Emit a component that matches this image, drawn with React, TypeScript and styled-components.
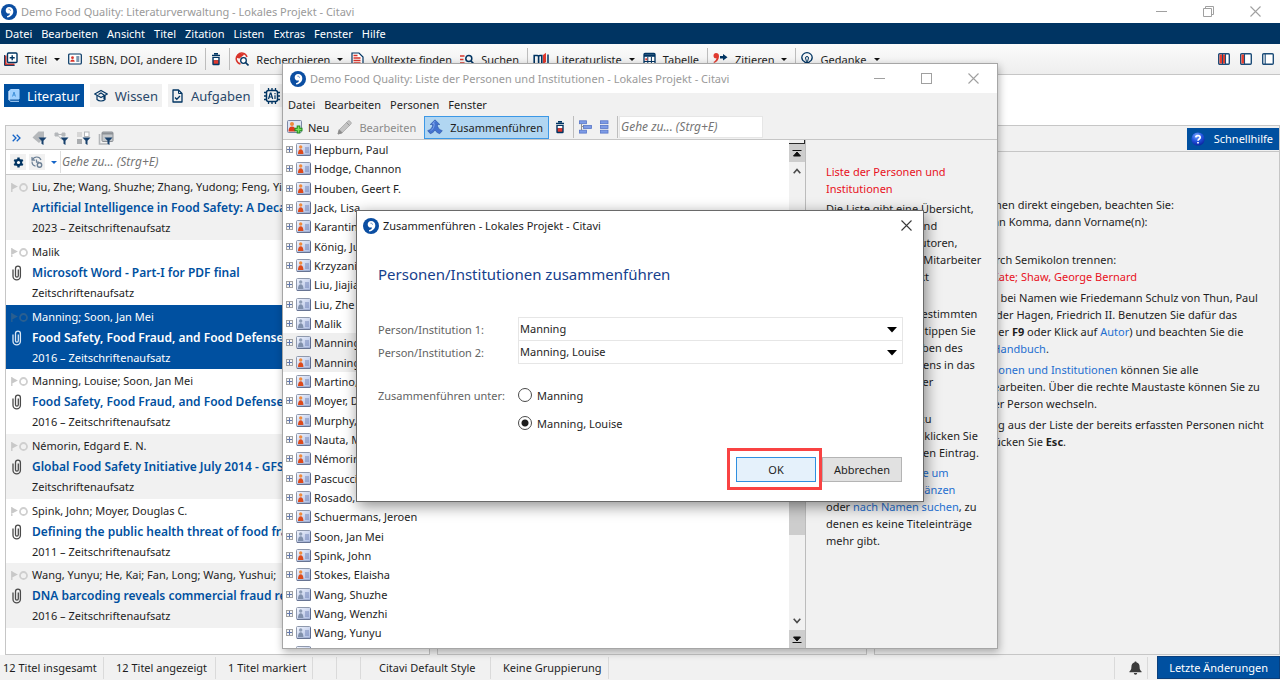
import React from "react";
import styled, { createGlobalStyle, css } from "styled-components";

const navy = "#003462";
const blue = "#0050a0";
const grey = "#f1f1f1";
const line = "#c6c6c6";
const linkBlue = "#1f6fd0";
const red = "#e81123";

const GlobalStyle = createGlobalStyle`
  * { box-sizing: border-box; }
  body { margin: 0; background: #fff; overflow: hidden; }
  body, button, input, select { font-family: "Noto Sans", "Open Sans", sans-serif; font-size: 11px; color: #1e1e1e; }
  button { margin: 0; padding: 0; border: 0; background: none; }
  ul, p, h1, h2, h3 { margin: 0; padding: 0; font-size: 11px; font-weight: 400; }
  ul { list-style: none; }
  svg { display: block; flex: none; }
`;

/* ---------- icons ---------- */

const Logo = () => (
  <svg width="16" height="16" viewBox="0 0 16 16">
    <circle cx="8" cy="8" r="8" fill="#0b4ea2" />
    <path d="M8 3c2.700 0 4.300 1.800 4.300 4.200 0 3.200-2.300 5.500-6 6.300l-.4-1.200c1.900-.7 2.900-1.600 3.100-2.900-.3.1-.7.2-1.100.2-1.900 0-3.200-1.400-3.200-3.200C4.700 4.400 6.100 3 8 3z" fill="#fff" />
    <path d="M7.400 5.200c1.100-.4 2.100.3 2.100 1.600" fill="none" stroke="#0b4ea2" strokeWidth=".6" />
  </svg>
);

const AddTitleIcon = () => (
  <svg width="14" height="14" viewBox="0 0 14 14">
    <path d="M1.500 3.500v9h9" fill="none" stroke="#d8342b" strokeWidth="2" />
    <path d="M.6 3v10.400h10" fill="none" stroke={navy} strokeWidth="1" />
    <rect x="3.500" y="1" width="9.500" height="9.500" rx="1" fill="#fff" stroke={navy} strokeWidth="1.400" />
    <path d="M8.200 3.200v5M5.700 5.700h5" stroke={navy} strokeWidth="1.400" />
  </svg>
);

const IdIcon = () => (
  <svg width="14" height="14" viewBox="0 0 14 14">
    <rect x=".7" y="2" width="12.600" height="10" rx="1" fill="#fff" stroke={navy} strokeWidth="1.200" />
    <circle cx="4.500" cy="5.700" r="1.400" fill="#d8342b" />
    <path d="M2.300 9.800c0-3 4.400-3 4.400 0z" fill="#d8342b" />
    <path d="M8.300 5h3M8.300 7h3M8.300 9h3" stroke={navy} />
  </svg>
);

const JarIcon = () => (
  <svg width="10" height="14" viewBox="0 0 10 14">
    <path d="M3 1.800h4M1 3.500h8" stroke={navy} strokeWidth="1.600" />
    <path d="M1.300 5h7.400v7a1.200 1.200 0 0 1-1.200 1.200h-5A1.200 1.200 0 0 1 1.300 12z" fill={navy} />
    <rect x="2.700" y="6" width="4.600" height="2.200" fill="#fff" />
    <rect x="2.700" y="8.200" width="4.600" height="3.500" fill="#e03a2f" />
  </svg>
);

const ResearchIcon = () => (
  <svg width="14" height="14" viewBox="0 0 14 14">
    <path d="M5.500 12A5.500 5.500 0 1 1 12 5" fill="none" stroke="#d8342b" strokeWidth="1.500" />
    <path d="M2 3l4-1.500 3.500 1-2 1.500-3 2.500L2 6z" fill="#d8342b" />
    <circle cx="8.500" cy="8.500" r="2.800" fill="#fff" stroke={navy} strokeWidth="1.300" />
    <path d="M10.500 10.500l3 3" stroke={navy} strokeWidth="1.600" />
  </svg>
);

const FullTextIcon = () => (
  <svg width="13" height="14" viewBox="0 0 13 14">
    <path d="M1 1h7l4 4v8.500H1z" fill="#fff" stroke={navy} strokeWidth="1.200" />
    <path d="M2.500 3.500h4M2.500 6h7M2.500 8.500h7M2.500 11h7" stroke="#d8342b" strokeWidth="1.400" />
  </svg>
);

const SearchIcon = () => (
  <svg width="14" height="14" viewBox="0 0 14 14">
    <path d="M0 4h4.500M0 7.500h3.500M0 11h4.500" stroke="#d8342b" strokeWidth="1.500" />
    <circle cx="8.800" cy="6.500" r="3" fill="none" stroke={navy} strokeWidth="1.500" />
    <path d="M11 9l2.700 3" stroke={navy} strokeWidth="1.700" />
  </svg>
);

const BiblioIcon = () => (
  <svg width="16" height="14" viewBox="0 0 16 14">
    <path d="M1.200 13V3.500h3.200q1.200 0 1.200 1.200V13M5.600 4.700q0-1.200 1.200-1.200h2V13" fill="none" stroke={navy} strokeWidth="1.600" />
    <path d="M10 3l3-2.200V10l-3 2.200z" fill="#e03a2f" />
    <path d="M15 2.500V12" stroke={navy} strokeWidth="1.500" />
  </svg>
);

const TableIcon = () => (
  <svg width="13" height="14" viewBox="0 0 13 14">
    <rect x="1" y="1.500" width="11" height="11" rx="1" fill="#fff" stroke={navy} strokeWidth="1.300" />
    <path d="M1 3.500h11" stroke={navy} strokeWidth="2.600" />
    <path d="M4.800 5v8M8.400 5v8M1 9.500h11" stroke={navy} />
    <rect x="2.300" y="6.300" width="2" height="2" fill="#e03a2f" />
  </svg>
);

const CiteIcon = () => (
  <svg width="15" height="14" viewBox="0 0 15 14">
    <path d="M3 1c1.900 0 3 1.200 3 3.200C6 7.400 4 9.800 1 11l-.5-1c1.800-1 2.800-2.200 3-3.700C1.700 6.600.5 5.500.5 3.700.5 2.100 1.600 1 3 1z" fill="#e03a2f" />
    <path d="M7 4h3V2l4.500 3.200L10 8.500v-2H7z" fill={navy} />
  </svg>
);

const ThoughtIcon = () => (
  <svg width="12" height="14" viewBox="0 0 12 14">
    <path d="M4 10C1.600 8.800.8 7.300.8 5.500a5.200 4.800 0 0 1 10.400 0C11.200 7.300 10.400 8.800 8 10" fill="none" stroke={navy} strokeWidth="1.300" />
    <path d="M4.500 6a1.500 1.500 0 0 1 3 0L6.500 9.500h-1z" fill="none" stroke={navy} />
    <path d="M3.500 10.500h5M4 12.800h4" stroke={navy} strokeWidth="1.400" />
  </svg>
);

const LayoutIcon = ({ bars }: { bars: number }) => (
  <svg width="12" height="12" viewBox="0 0 12 12">
    <rect x=".7" y=".7" width="10.600" height="10.600" rx="1" fill="#fff" stroke="#1d4d79" strokeWidth="1.400" />
    {bars > 0 && <rect x="1.500" y="1.500" width="2.500" height="9" fill="#e8402f" />}
    {bars > 1 && <rect x="5" y="1.500" width="2" height="9" fill="#e8402f" />}
    <path d={bars === 0 ? "M3.200 1v10" : "M4.500 1v10"} stroke="#1d4d79" strokeWidth="1.100" />
    {bars > 1 && <path d="M7.500 1v10" stroke="#1d4d79" strokeWidth="1.100" />}
  </svg>
);

const BookIcon = () => (
  <svg width="12" height="13" viewBox="0 0 12 13">
    <path d="M2.500.5H11v9.500H2.500a1.200 1.200 0 0 0 0 2.300H11" fill="none" stroke="#b8dcff" />
    <path d="M1 2A1.500 1.500 0 0 1 2.500.5H11V10H1z" fill="#9fd0ff" />
    <path d="M4.500 7.500L6 3l1.500 4.500M5 6h2" fill="none" stroke="#3d8ed8" strokeWidth=".9" />
    <path d="M1 2v9" stroke="#d5eaff" strokeWidth="1.300" />
  </svg>
);

const CapIcon = () => (
  <svg width="14" height="14" viewBox="0 0 14 14">
    <path d="M7 1.500L13.300 5 7 8.500.7 5z" fill="none" stroke={navy} strokeWidth="1.300" strokeLinejoin="round" />
    <path d="M3 6.500v4c2 2 6 2 8 0v-4M4.500 5.500L7 4l3 2v4" fill="none" stroke={navy} strokeWidth="1.200" />
  </svg>
);

const TaskIcon = () => (
  <svg width="12" height="14" viewBox="0 0 12 14">
    <path d="M1 1h5.500L10 4.500V13H1z" fill="none" stroke={navy} strokeWidth="1.300" strokeLinejoin="round" />
    <path d="M6.500 1v3.500H10" fill="none" stroke={navy} />
    <path d="M3 8.500l1.800 1.800L8 7" fill="none" stroke={navy} strokeWidth="1.300" />
  </svg>
);

const ChipIcon = () => (
  <svg width="16" height="16" viewBox="0 0 16 16">
    <path d="M4.500 0v16M8 0v2M11.500 0v16M8 14v2M0 4.500h16M0 8h2M0 11.500h16M14 8h2" stroke={navy} strokeWidth="1.300" />
    <rect x="2.500" y="2.500" width="11" height="11" rx="2" fill={grey} stroke={navy} strokeWidth="1.500" />
    <path d="M4.500 11L6.300 5.200h.7L8.700 11M5.200 9h2.700M11 7.200V11M11 5v1.200" fill="none" stroke={navy} strokeWidth="1.200" />
  </svg>
);

const ChevronsIcon = () => (
  <svg width="9" height="8" viewBox="0 0 9 8">
    <path d="M.7.7L4 4 .7 7.300M4.700.7L8 4 4.700 7.300" fill="none" stroke="#1464c8" strokeWidth="1.300" />
  </svg>
);

const funnel = <path d="M6.500 7.500h8l-3 3.300V15l-2-1.300v-2.900z" fill="#17406c" />;

const FilterTagIcon = () => (
  <svg width="16" height="16" viewBox="0 0 16 16">
    <path d="M.5 7.500L6.500 1.500H12V8L7 13z" fill="#b4b7ba" />
    {funnel}
  </svg>
);
const FilterTreeIcon = () => (
  <svg width="16" height="16" viewBox="0 0 16 16">
    <path d="M1 3h3v3H1zM8 3h3v3H8zM4 4.500h4M4 5.500l3.500 4" fill="#b4b7ba" stroke="#b4b7ba" />
    {funnel}
  </svg>
);
const FilterGridIcon = () => (
  <svg width="16" height="16" viewBox="0 0 16 16">
    <rect x="1" y="2" width="5" height="5" fill="#d6d6d6" />
    <rect x="8.500" y="2" width="4.500" height="4.500" fill="#fff" stroke="#b4b7ba" />
    <rect x="1" y="9" width="5" height="5" fill="#a9acaf" />
    {funnel}
  </svg>
);
const FilterStackIcon = () => (
  <svg width="16" height="16" viewBox="0 0 16 16">
    <path d="M1.500 4v10h9" fill="none" stroke="#b4b7ba" strokeWidth="1.600" />
    <rect x="4" y="2" width="11" height="9.500" rx="1" fill="#c6c9cc" stroke="#8d9196" />
    <path d="M4 3.500h11" stroke="#8d9196" strokeWidth="2" />
    {funnel}
  </svg>
);

const GearIcon = () => (
  <svg width="11" height="11" viewBox="0 0 12 12">
    <g stroke={navy} strokeWidth="2.600">
      <path d="M6 .6v10.800M1.300 3.300l9.400 5.400M1.300 8.700l9.400-5.400" />
    </g>
    <circle cx="6" cy="6" r="4" fill={navy} />
    <circle cx="6" cy="6" r="1.700" fill="#fff" />
  </svg>
);

const HistoryIcon = () => (
  <svg width="12" height="12" viewBox="0 0 12 12">
    <path d="M1.500 4A4.500 4.500 0 0 1 10 4M1 5.500c0 2 1 4 3.500 4.700M1 1v3.200h3.200M5.500 3.500v2.700H8" fill="none" stroke="#6c8096" strokeWidth="1.200" />
    <circle cx="8.500" cy="9" r="2.200" fill="none" stroke="#6c8096" strokeWidth="1.400" />
  </svg>
);

const FlagDot = ({ dim }: { dim?: boolean }) => (
  <svg width="17" height="10" viewBox="0 0 17 10">
    <path d="M.8 1v9M.8 2l4.700 2.500L.8 7z" fill={dim ? "#2a5f90" : "#c8c8c8"} stroke={dim ? "#2a5f90" : "#c8c8c8"} strokeWidth="1.300" />
    <circle cx="12.500" cy="5.500" r="3.500" fill="none" stroke={dim ? "#2a5f90" : "#cfcfcf"} strokeWidth="1.800" />
  </svg>
);

const ClipIcon = ({ color }: { color: string }) => (
  <svg width="11" height="16" viewBox="0 0 11 16">
    <path d="M7.300 4.500v6.200a1.400 1.400 0 0 1-2.800 0V3.500a2.400 2.400 0 0 1 4.900 0v7.700a3.700 3.700 0 0 1-7.400 0V4.500" fill="none" stroke={color} strokeWidth="1.300" />
  </svg>
);

const HelpIcon = () => (
  <svg width="14" height="14" viewBox="0 0 14 14">
    <defs>
      <radialGradient id="help" cx=".4" cy=".25" r=".8">
        <stop offset="0" stopColor="#7aa8ff" />
        <stop offset=".5" stopColor="#2456e0" />
        <stop offset="1" stopColor="#0a1f9c" />
      </radialGradient>
    </defs>
    <circle cx="7" cy="7" r="6.600" fill="url(#help)" />
    <path d="M4.800 5.400C4.900 3 9.200 3 9.200 5.400 9.200 7 7 6.900 7 8.700M7 9.900v1.600" fill="none" stroke="#fff" strokeWidth="1.700" />
  </svg>
);

const BellIcon = () => (
  <svg width="13" height="14" viewBox="0 0 13 14">
    <path d="M6.500.5c.7 0 1.100.5 1.100 1.100 2 .5 3 2.200 3 4.300 0 2.600.8 3.500 2 4.600v.8H.4v-.8c1.200-1.100 2-2 2-4.600 0-2.100 1-3.800 3-4.300C5.400 1 5.800.5 6.500.5z" fill="#3c3c3c" />
    <path d="M4.800 12h3.400a1.700 1.700 0 0 1-3.400 0z" fill="#3c3c3c" />
  </svg>
);

const PersonCard = ({ known }: { known?: boolean }) => (
  <svg width="15" height="13" viewBox="0 0 15 13">
    <rect x=".5" y=".5" width="14" height="12" rx="1" fill="url(#card)" stroke="#8f99ad" />
    <path d="M1 12.300h13.500V1.500" fill="none" stroke="#5d6b8c" />
    <circle cx="4.700" cy="4" r="1.700" fill={known ? "#f08a3c" : "#8e9db5"} />
    <path d="M2 11c0-2.800 1-4.700 2.700-4.700S7.400 8.200 7.400 11z" fill={known ? "#dc4a1c" : "#8090ab"} />
    <path d="M9 5h4M9 7h4M9 9h4" stroke="#7486b8" />
  </svg>
);

const PlusBox = () => (
  <svg width="7" height="7" viewBox="0 0 7 7">
    <rect x=".5" y=".5" width="6" height="6" fill="#f4f4f4" stroke="#a2a2a2" />
    <path d="M3.500 1v5M1 3.500h5" stroke="#6379ad" />
  </svg>
);

const NewPersonIcon = () => (
  <svg width="16" height="14" viewBox="0 0 16 14">
    <rect x=".5" y=".5" width="14" height="12" rx="1" fill="#dfe5f3" stroke="#7b87a5" />
    <circle cx="5" cy="4" r="2" fill="#f08a3c" />
    <path d="M1.500 11.500c0-3.300 1.200-5 3.500-5s3.500 1.700 3.500 5z" fill="#dc3a1c" />
    <path d="M11.500 5.500v8M7.500 9.500h8" stroke="#1f8a1f" strokeWidth="3.600" />
    <path d="M11.500 6.500v6M8.500 9.500h6" stroke="#7be05a" strokeWidth="1.600" />
  </svg>
);

const PencilIcon = () => (
  <svg width="17" height="15" viewBox="0 0 17 15">
    <path d="M1 14l1.200-4.200L10.800 1.200a1.500 1.500 0 0 1 2.200 0l.8.8a1.500 1.500 0 0 1 0 2.200L5.200 12.800z" fill="#c4c4c4" stroke="#a0a0a0" strokeWidth=".7" />
    <path d="M1 14l1.200-4.200 3 3zM9.500 2.500l3 3" fill="#8c8c8c" stroke="#8c8c8c" strokeWidth=".8" />
  </svg>
);

const MergeIcon = () => (
  <svg width="16" height="16" viewBox="0 0 16 16">
    <path d="M8 .8l4.800 4.700h-2.500c.1 3 1.500 5 5 6.200l-2.600 3C10.500 14 9 12.800 8 11c-1 1.800-2.500 3-4.700 3.700l-2.600-3c3.500-1.200 4.900-3.200 5-6.200H3.200z" fill="#4372cf" stroke="#2a50a5" strokeWidth=".6" />
    <path d="M8 2.200L5.800 4.600h1.400c0 3-.8 5-3.200 7" fill="none" stroke="#8db1f2" strokeWidth=".8" />
  </svg>
);

const StairIcon = () => (
  <svg width="13" height="14" viewBox="0 0 13 14">
    <g fill="#7d9be6" stroke="#5675c8" strokeWidth=".8">
      <rect x=".5" y=".8" width="7" height="2.900" />
      <rect x="4.500" y="5.500" width="8" height="2.900" />
      <rect x=".5" y="10.200" width="7" height="2.900" />
    </g>
    <path d="M2.500 4v2.500h2M2.500 6.500V10" fill="none" stroke="#7b7b7b" strokeWidth=".8" />
  </svg>
);
const StackIcon = () => (
  <svg width="9" height="14" viewBox="0 0 9 14">
    <g fill="#7d9be6" stroke="#5675c8" strokeWidth=".8">
      <rect x=".5" y=".8" width="7.500" height="2.900" />
      <rect x=".5" y="5.500" width="7.500" height="2.900" />
      <rect x=".5" y="10.200" width="7.500" height="2.900" />
    </g>
  </svg>
);

const Minimize = () => (
  <svg width="11" height="11" viewBox="0 0 11 11"><path d="M0 5.500h11" stroke="#a0a0a0" /></svg>
);
const Maximize = () => (
  <svg width="11" height="11" viewBox="0 0 11 11"><rect x=".5" y=".5" width="10" height="10" fill="none" stroke="#a0a0a0" /></svg>
);
const Restore = () => (
  <svg width="11" height="11" viewBox="0 0 11 11">
    <path d="M.5 2.500h8v8h-8zM2.500 2.500v-2h8v8h-2" fill="none" stroke="#a0a0a0" />
  </svg>
);
const Close = ({ color = "#a0a0a0" }: { color?: string }) => (
  <svg width="11" height="11" viewBox="0 0 11 11"><path d="M.5.5l10 10M10.500.5l-10 10" stroke={color} strokeWidth="1.100" /></svg>
);
const CaretDown = ({ color = "#111" }: { color?: string }) => (
  <svg width="6" height="3" viewBox="0 0 6 3"><path d="M0 0h6L3 3z" fill={color} /></svg>
);

/* ---------- main window ---------- */

const Desktop = styled.div`
  position: relative;
  display: flex;
  flex-direction: column;
  height: 100vh;
  overflow: hidden;
  background: #fff;
`;

const TitleBar = styled.header<{ $size: "app" | "window" | "dialog" }>`
  display: flex;
  align-items: center;
  gap: 4px;
  background: #fff;
  color: ${(p) => (p.$size === "dialog" ? "#1e1e1e" : "#9a9a9a")};
  ${(p) => p.$size === "app" && css`height: 23px; padding: 0 19px 0 1px;`}
  ${(p) => p.$size === "window" && css`height: 29px; padding: 0 18px 0 7px;`}
  ${(p) => p.$size === "dialog" && css`height: 29px; padding: 0 11px 0 6px;`}
`;
const TitleText = styled.h1`
  flex: 1;
  white-space: nowrap;
`;
const CaptionButtons = styled.div`
  display: flex;
  gap: 36px;
`;

const MenuBar = styled.nav<{ $dark?: boolean }>`
  display: flex;
  align-items: center;
  gap: 9px;
  padding: 0 5px;
  height: ${(p) => (p.$dark ? "21px" : "22px")};
  background: ${(p) => (p.$dark ? navy : grey)};
  button { color: ${(p) => (p.$dark ? "#fff" : "#1e1e1e")}; }
`;

const ToolBar = styled.div`
  display: flex;
  align-items: center;
  height: 31px;
  padding: 0 6px 0 4px;
  background: linear-gradient(#fbfbfb, #eeeeee);
  border-bottom: 1px solid ${line};
`;
const Tool = styled.button<{ $muted?: boolean }>`
  display: flex;
  align-items: center;
  gap: 7px;
  margin-right: 8px;
  white-space: nowrap;
  color: ${(p) => (p.$muted ? "#8a8a8a" : "#1e1e1e")};
`;
const Separator = styled.span<{ $tight?: boolean }>`
  width: 1px;
  height: 22px;
  margin-right: ${(p) => (p.$tight ? "1px" : "5px")};
  background: #bdbdbd;
`;
const Spacer = styled.span`
  flex: 1;
`;
const LayoutButtons = styled.div`
  display: flex;
  gap: 10px;
`;

const Tabs = styled.div`
  display: flex;
  gap: 6px;
  height: 50px;
  padding: 9px 4px 0;
`;
const Tab = styled.button<{ $active?: boolean }>`
  display: flex;
  align-items: center;
  gap: 7px;
  height: 23px;
  padding: 0 4px;
  font-size: 13px;
  background: ${(p) => (p.$active ? blue : grey)};
  color: ${(p) => (p.$active ? "#fff" : "#29486a")};
`;

const Panels = styled.main`
  flex: 1;
  min-height: 0;
  display: grid;
  grid-template-columns: 426fr 430fr 407fr;
  gap: 7px;
  margin-left: 5px;
  background: ${grey};
`;
const Panel = styled.section<{ $white?: boolean }>`
  min-width: 0;
  overflow: hidden;
  border: 1px solid ${line};
  background: ${(p) => (p.$white ? "#fff" : grey)};
`;
const PanelHeader = styled.div`
  display: flex;
  align-items: center;
  height: 24px;
  padding: 0 6px;
  background: ${grey};
  border-bottom: 1px solid ${line};
`;
const Filters = styled.div`
  display: flex;
  gap: 6px;
  margin-left: 11px;
`;
const HelpHeader = styled(PanelHeader)`
  justify-content: flex-end;
  height: 26px;
  padding: 0;
`;
const HelpTab = styled.button`
  display: flex;
  align-items: center;
  gap: 9px;
  height: 22px;
  padding: 0 6px 0 4px;
  background: ${blue};
  color: #fff;
`;
const SearchRow = styled.div`
  display: flex;
  align-items: center;
  height: 25px;
  padding-left: 4px;
  border-bottom: 1px solid ${line};
`;
const SmallButton = styled.button<{ $bare?: boolean }>`
  display: grid;
  place-items: center;
  width: ${(p) => (p.$bare ? "11px" : "16px")};
  height: 16px;
  margin-right: ${(p) => (p.$bare ? "1px" : "3px")};
  background: ${(p) => (p.$bare ? "none" : grey)};
`;
const GoTo = styled.input`
  flex: 1;
  min-width: 0;
  height: 22px;
  padding: 0 1px 1px;
  border: 0;
  border-left: 1px solid #dedede;
  outline: 0;
  background: #fff;
  font-size: 12px;
  font-style: italic;
  &::placeholder { color: #757575; opacity: 1; }
`;

const TitleList = styled.ul`
  display: grid;
  grid-auto-rows: 65px 65px 64px;
`;
const TitleItem = styled.li<{ $shade: "white" | "grey" | "selected" }>`
  display: grid;
  grid-template-columns: 21px 1fr;
  grid-template-rows: 23px 20px 18px;
  align-items: center;
  padding-left: 5px;
  white-space: nowrap;
  background: ${(p) => (p.$shade === "selected" ? blue : p.$shade === "grey" ? grey : "#fff")};
  color: ${(p) => (p.$shade === "selected" ? "#fff" : "#1e1e1e")};
`;
const ItemMark = styled.span`
  grid-column: 1;
`;
const ItemText = styled.span`
  grid-column: 2;
`;
const ItemTitle = styled.strong<{ $selected?: boolean }>`
  grid-column: 2;
  font-size: 12px;
  font-weight: 600;
  line-height: 18px;
  color: ${(p) => (p.$selected ? "#fff" : blue)};
`;

const HelpText = styled.div`
  display: flex;
  flex-direction: column;
  gap: 4px;
  padding: 23px 16px 0 20px;
  line-height: 17px;
  white-space: nowrap;
  a { color: ${linkBlue}; text-decoration: none; }
`;
const RedText = styled.span`
  color: ${red};
`;

const StatusBar = styled.footer`
  display: flex;
  align-items: center;
  height: 25px;
  background: ${grey};
`;
const StatusCell = styled.span<{ $width: number; $pad?: number }>`
  display: flex;
  align-items: center;
  width: ${(p) => p.$width}px;
  height: 22px;
  padding-left: ${(p) => p.$pad ?? 12}px;
  border-right: 1px solid #dadada;
  white-space: nowrap;
`;
const BellCell = styled.button`
  display: grid;
  place-items: center;
  width: 34px;
  height: 22px;
  margin-right: 9px;
  padding-left: 8px;
  border: solid #dadada;
  border-width: 0 1px;
`;
const ChangesButton = styled.button`
  height: 23px;
  padding: 0 11px;
  border: 1px solid #0a3f7c;
  background: ${blue};
  color: #fff;
`;

/* ---------- person list window ---------- */

const PersonWindow = styled.section`
  position: absolute;
  left: 282px;
  top: 63px;
  display: flex;
  flex-direction: column;
  width: 716px;
  height: 586px;
  border: 1px solid #a6a6a6;
  background: ${grey};
  box-shadow: 1px 3px 8px rgba(0, 0, 0, 0.3);
`;
const WindowTools = styled(ToolBar)`
  height: 25px;
  background: ${grey};
`;
const WindowTool = styled(Tool)`
  gap: 5px;
`;
const ToggledTool = styled(Tool)`
  height: 23px;
  padding: 0 5px 0 2px;
  margin-right: 6px;
  border: 1px solid #3c98e6;
  background: #b1d6f2;
`;
const ToolGoTo = styled(GoTo)`
  flex: none;
  width: 144px;
  height: 22px;
  border: 1px solid #e6e6e6;
`;
const WindowBody = styled.div`
  flex: 1;
  min-height: 0;
  display: grid;
  grid-template-columns: 1fr 17px 191px;
`;
const Tree = styled.ul`
  overflow: hidden;
  display: grid;
  grid-auto-rows: 19px 19px 20px;
  background: #fff;
`;
const TreeRow = styled.li<{ $marked?: boolean }>`
  display: flex;
  align-items: center;
  gap: 3px;
  padding-left: 3px;
  white-space: nowrap;
  background: ${(p) => (p.$marked ? "#efefef" : "transparent")};
`;
const ScrollBar = styled.div`
  display: flex;
  flex-direction: column;
  align-items: stretch;
  border-right: 1px solid #bcbcbc;
`;
const ScrollCap = styled.span`
  height: 4px;
  border: solid #2a2a2a;
  border-width: 0 1px 1px 0;
`;
const ScrollButton = styled.button<{ $filled?: boolean }>`
  display: grid;
  place-items: center;
  height: 18px;
  background: ${(p) => (p.$filled ? "#cdcdcd" : "transparent")};
`;
const ScrollThumb = styled.span`
  flex: 1;
  margin: 30px 0 77px;
  background: #cdcdcd;
`;
const SideHelp = styled(HelpText)`
  gap: 3px;
  overflow: hidden;
`;

/* ---------- merge dialog ---------- */

const Dialog = styled.section`
  position: absolute;
  left: 356px;
  top: 210px;
  width: 568px;
  border: 1px solid #6a6a6a;
  background: #fff;
  box-shadow: 2px 4px 14px rgba(0, 0, 0, 0.45);
`;
const DialogForm = styled.form`
  padding: 22px 20px 11px 21px;
`;
const Heading = styled.h2`
  margin-bottom: 31px;
  font-size: 15px;
  line-height: 24px;
  color: #16408c;
`;
const Field = styled.div`
  display: grid;
  grid-template-columns: 140px 1fr;
  align-items: center;
  height: 23px;
  color: #636363;
`;
const SelectBox = styled.div`
  position: relative;
  height: 24px;
  svg { position: absolute; right: 6px; top: 10px; pointer-events: none; }
`;
const Select = styled.select`
  appearance: none;
  width: 100%;
  height: 24px;
  padding: 0 1px 2px;
  border: 1px solid #e6e6e6;
  border-radius: 0;
  background: #fff;
`;
const Choices = styled.fieldset`
  display: grid;
  grid-template-columns: 140px 1fr;
  row-gap: 8px;
  margin: 22px 0 0;
  padding: 0;
  border: 0;
`;
const ChoicesLabel = styled.span`
  align-self: center;
  color: #636363;
`;
const Choice = styled.label`
  grid-column: 2;
  display: flex;
  align-items: center;
  gap: 5px;
  height: 20px;
`;
const Radio = styled.input`
  appearance: none;
  width: 14px;
  height: 14px;
  margin: 0;
  border: 1px solid #4a4a4a;
  border-radius: 50%;
  background: #fff;
  &:checked { background: radial-gradient(circle, #1e1e1e 3px, #fff 4px); }
`;
const Buttons = styled.div`
  display: flex;
  justify-content: flex-end;
  align-items: center;
  margin-top: 15px;
  padding-right: 1px;
`;
const Highlight = styled.div`
  padding: 6px 3px 5px 6px;
  border: 3px solid #f94343;
`;
const PushButton = styled.button<{ $primary?: boolean }>`
  display: block;
  width: 80px;
  height: 25px;
  border: 1px solid ${(p) => (p.$primary ? "#2f8fe0" : "#b4b4b4")};
  background: ${(p) => (p.$primary ? "#e5f1fb" : "#e1e1e1")};
`;

/* ---------- data ---------- */

const titles = [
  { authors: "Liu, Zhe; Wang, Shuzhe; Zhang, Yudong; Feng, Yichen", title: "Artificial Intelligence in Food Safety: A Decade Review", type: "2023 – Zeitschriftenaufsatz", file: false },
  { authors: "Malik", title: "Microsoft Word - Part-I for PDF final", type: "Zeitschriftenaufsatz", file: true },
  { authors: "Manning; Soon, Jan Mei", title: "Food Safety, Food Fraud, and Food Defense: A Fast", type: "2016 – Zeitschriftenaufsatz", file: true, selected: true },
  { authors: "Manning, Louise; Soon, Jan Mei", title: "Food Safety, Food Fraud, and Food Defense: A Fast", type: "2016 – Zeitschriftenaufsatz", file: true },
  { authors: "Némorin, Edgard E. N.", title: "Global Food Safety Initiative July 2014 - GFSI", type: "Zeitschriftenaufsatz", file: true },
  { authors: "Spink, John; Moyer, Douglas C.", title: "Defining the public health threat of food fraud", type: "2011 – Zeitschriftenaufsatz", file: true },
  { authors: "Wang, Yunyu; He, Kai; Fan, Long; Wang, Yushui;", title: "DNA barcoding reveals commercial fraud related", type: "2016 – Zeitschriftenaufsatz", file: true },
];

const persons: { name: string; used?: boolean; marked?: boolean }[] = [
  { name: "Hepburn, Paul" },
  { name: "Hodge, Channon" },
  { name: "Houben, Geert F." },
  { name: "Jack, Lisa" },
  { name: "Karantininis, Kostas" },
  { name: "König, Julia" },
  { name: "Krzyzaniak, Stanislaw" },
  { name: "Liu, Jiajia", used: true },
  { name: "Liu, Zhe", used: true },
  { name: "Malik", used: true },
  { name: "Manning", used: true, marked: true },
  { name: "Manning, Louise", marked: true },
  { name: "Martino, Gaetano" },
  { name: "Moyer, Douglas C." },
  { name: "Murphy, Blaine" },
  { name: "Nauta, Maarten" },
  { name: "Némorin, Edgard E. N." },
  { name: "Pascucci, Stefano" },
  { name: "Rosado, M." },
  { name: "Schuermans, Jeroen" },
  { name: "Soon, Jan Mei", used: true },
  { name: "Spink, John" },
  { name: "Stokes, Elaisha" },
  { name: "Wang, Shuzhe", used: true },
  { name: "Wang, Wenzhi", used: true },
  { name: "Wang, Yunyu", used: true },
  { name: "Wang, Yushui", used: true },
];

const Menu = ({ items, dark }: { items: string[]; dark?: boolean }) => (
  <MenuBar $dark={dark}>
    {items.map((item) => (
      <button key={item} type="button">{item}</button>
    ))}
  </MenuBar>
);

export default function App() {
  return (
    <Desktop>
      <GlobalStyle />
      <TitleBar $size="app">
        <Logo />
        <TitleText>Demo Food Quality: Literaturverwaltung - Lokales Projekt - Citavi</TitleText>
        <CaptionButtons>
          <button type="button" aria-label="Minimieren"><Minimize /></button>
          <button type="button" aria-label="Wiederherstellen"><Restore /></button>
          <button type="button" aria-label="Schließen"><Close /></button>
        </CaptionButtons>
      </TitleBar>
      <Menu dark items={["Datei", "Bearbeiten", "Ansicht", "Titel", "Zitation", "Listen", "Extras", "Fenster", "Hilfe"]} />
      <ToolBar>
        <Tool type="button"><AddTitleIcon />Titel<CaretDown /></Tool>
        <Tool type="button"><IdIcon />ISBN, DOI, andere ID</Tool>
        <Separator />
        <Tool type="button" aria-label="Löschen"><JarIcon /></Tool>
        <Separator />
        <Tool type="button"><ResearchIcon />Recherchieren<CaretDown /></Tool>
        <Tool type="button"><FullTextIcon />Volltexte finden</Tool>
        <Tool type="button"><SearchIcon />Suchen</Tool>
        <Separator />
        <Tool type="button"><BiblioIcon />Literaturliste<CaretDown /></Tool>
        <Tool type="button"><TableIcon />Tabelle</Tool>
        <Separator />
        <Tool type="button"><CiteIcon />Zitieren<CaretDown /></Tool>
        <Separator />
        <Tool type="button"><ThoughtIcon />Gedanke<CaretDown /></Tool>
        <Spacer />
        <LayoutButtons>
          <button type="button" aria-label="Drei Spalten"><LayoutIcon bars={2} /></button>
          <button type="button" aria-label="Zwei Spalten"><LayoutIcon bars={1} /></button>
          <button type="button" aria-label="Eine Spalte"><LayoutIcon bars={0} /></button>
        </LayoutButtons>
      </ToolBar>
      <Tabs>
        <Tab type="button" $active><BookIcon />Literatur</Tab>
        <Tab type="button"><CapIcon />Wissen</Tab>
        <Tab type="button"><TaskIcon />Aufgaben</Tab>
        <Tab type="button" aria-label="KI-Assistent"><ChipIcon /></Tab>
      </Tabs>

      <Panels>
        <Panel $white>
          <PanelHeader>
            <ChevronsIcon />
            <Filters>
              <FilterTagIcon />
              <FilterTreeIcon />
              <FilterGridIcon />
              <FilterStackIcon />
            </Filters>
          </PanelHeader>
          <SearchRow>
            <SmallButton type="button" aria-label="Einstellungen"><GearIcon /></SmallButton>
            <SmallButton type="button" aria-label="Verlauf"><HistoryIcon /></SmallButton>
            <SmallButton type="button" $bare aria-label="Verlauf anzeigen"><CaretDown color="#1464c8" /></SmallButton>
            <GoTo aria-label="Gehe zu" placeholder="Gehe zu... (Strg+E)" />
          </SearchRow>
          <TitleList>
            {titles.map((t, i) => (
              <TitleItem key={i} $shade={t.selected ? "selected" : i % 2 ? "white" : "grey"}>
                <ItemMark><FlagDot dim={t.selected} /></ItemMark>
                <ItemText>{t.authors}</ItemText>
                <ItemMark>{t.file && <ClipIcon color={t.selected ? "#dbe8f5" : "#4a4a4a"} />}</ItemMark>
                <ItemTitle $selected={t.selected}>{t.title}</ItemTitle>
                <ItemText>{t.type}</ItemText>
              </TitleItem>
            ))}
          </TitleList>
        </Panel>
        <Panel><PanelHeader /></Panel>
        <Panel>
          <HelpHeader>
            <HelpTab type="button"><HelpIcon />Schnellhilfe</HelpTab>
          </HelpHeader>
          <HelpText>
            <RedText as="h3">Autor</RedText>
            <p>
              Wenn Sie einen Namen direkt eingeben, beachten Sie:<br />
              Erst Nachname, dann Komma, dann Vorname(n):<br />
              <RedText>Shaw, George</RedText>
            </p>
            <p>
              Mehrere Namen durch Semikolon trennen:<br />
              <RedText>Brown-Beckinsale, Kate; Shaw, George Bernard</RedText>
            </p>
            <p>
              Vorsicht geboten ist bei Namen wie Friedemann Schulz von Thun, Paul<br />
              van Gogh oder von der Hagen, Friedrich II. Benutzen Sie dafür das<br />
              Formular (Tasten oder <b>F9</b> oder Klick auf <a href="#autor">Autor</a>) und beachten Sie die<br />
              Hinweise im <a href="#handbuch">Citavi-Handbuch</a>.
            </p>
            <p>
              In der <a href="#personen">Liste der Personen und Institutionen</a> können Sie alle<br />
              Personen einzeln bearbeiten. Über die rechte Maustaste können Sie zu<br />
              anderen Titeln dieser Person wechseln.
            </p>
            <p>
              Wenn Sie den Eintrag aus der Liste der bereits erfassten Personen nicht<br />
              übernehmen, so drücken Sie <b>Esc</b>.
            </p>
          </HelpText>
        </Panel>
      </Panels>
      <StatusBar>
        <StatusCell $width={104} $pad={3}>12 Titel insgesamt</StatusCell>
        <StatusCell $width={112}>12 Titel angezeigt</StatusCell>
        <StatusCell $width={97}>1 Titel markiert</StatusCell>
        <StatusCell $width={24} />
        <StatusCell $width={24} />
        <StatusCell $width={130} $pad={18}>Citavi Default Style</StatusCell>
        <StatusCell $width={118}>Keine Gruppierung</StatusCell>
        <Spacer />
        <BellCell type="button" aria-label="Benachrichtigungen"><BellIcon /></BellCell>
        <ChangesButton type="button">Letzte Änderungen</ChangesButton>
      </StatusBar>

      <PersonWindow>
        <svg width="0" height="0" style={{ position: "absolute" }}>
          <defs>
            <linearGradient id="card" x1="0" y1="0" x2="1" y2="1">
              <stop offset="0" stopColor="#f4f7ff" />
              <stop offset="1" stopColor="#a9b9e0" />
            </linearGradient>
          </defs>
        </svg>
        <TitleBar $size="window">
          <Logo />
          <TitleText as="h2">Demo Food Quality: Liste der Personen und Institutionen - Lokales Projekt - Citavi</TitleText>
          <CaptionButtons>
            <button type="button" aria-label="Minimieren"><Minimize /></button>
            <button type="button" aria-label="Maximieren"><Maximize /></button>
            <button type="button" aria-label="Schließen"><Close /></button>
          </CaptionButtons>
        </TitleBar>
        <Menu items={["Datei", "Bearbeiten", "Personen", "Fenster"]} />
        <WindowTools>
          <WindowTool type="button"><NewPersonIcon />Neu</WindowTool>
          <WindowTool type="button" $muted><PencilIcon />Bearbeiten</WindowTool>
          <ToggledTool type="button" aria-pressed="true"><MergeIcon />Zusammenführen</ToggledTool>
          <WindowTool type="button" aria-label="Löschen"><JarIcon /></WindowTool>
          <Separator />
          <WindowTool type="button" aria-label="Hierarchie"><StairIcon /></WindowTool>
          <WindowTool type="button" aria-label="Liste"><StackIcon /></WindowTool>
          <Separator $tight />
          <ToolGoTo aria-label="Gehe zu Person" placeholder="Gehe zu... (Strg+E)" />
        </WindowTools>
        <WindowBody>
          <Tree>
            {persons.map((p) => (
              <TreeRow key={p.name} $marked={p.marked}>
                <PlusBox />
                <PersonCard known={!p.used} />
                {p.name}
              </TreeRow>
            ))}
          </Tree>
          <ScrollBar>
            <ScrollCap />
            <ScrollButton type="button" $filled aria-label="Zum Anfang">
              <svg width="10" height="7" viewBox="0 0 10 7"><path d="M.5 .5h9M5 2l3.500 4h-7z" fill="#111" stroke="#111" /></svg>
            </ScrollButton>
            <ScrollButton type="button" aria-label="Nach oben">
              <svg width="8" height="6" viewBox="0 0 8 6"><path d="M.7 5.200L4 1.400l3.300 3.800" fill="none" stroke="#4a4a4a" strokeWidth="1.600" /></svg>
            </ScrollButton>
            <ScrollThumb />
            <ScrollButton type="button" aria-label="Nach unten">
              <svg width="8" height="6" viewBox="0 0 8 6"><path d="M.7.8L4 4.600 7.300.8" fill="none" stroke="#4a4a4a" strokeWidth="1.600" /></svg>
            </ScrollButton>
            <ScrollButton type="button" $filled aria-label="Zum Ende">
              <svg width="10" height="7" viewBox="0 0 10 7"><path d="M.5 6.500h9M5 5L1.500 1h7z" fill="#111" stroke="#111" /></svg>
            </ScrollButton>
          </ScrollBar>
          <SideHelp>
            <RedText as="h3">Liste der Personen und<br />Institutionen</RedText>
            <p>
              Die Liste gibt eine Übersicht,<br />
              welche Personen und<br />
              Institutionen als Autoren,<br />
              Herausgeber oder Mitarbeiter<br />
              im aktuellen Projekt<br />
              erfasst sind.
            </p>
            <p>
              Um einzeln nach bestimmten<br />
              Namen zu suchen, tippen Sie<br />
              die ersten Buchstaben des<br />
              gewünschten Namens in das<br />
              Feld „Gehe zu“ in der<br />
              Symbolleiste.
            </p>
            <p>
              Um einen Namen zu<br />
              bearbeiten, doppelklicken Sie<br />
              auf den betreffenden Eintrag.
            </p>
            <p>
              Sie können <a href="#liste">die Liste um</a><br />
              <a href="#ergaenzen">neue Personen ergänzen</a><br />
              oder <a href="#suchen">nach Namen suchen</a>, zu<br />
              denen es keine Titeleinträge<br />
              mehr gibt.
            </p>
          </SideHelp>
        </WindowBody>
      </PersonWindow>

      <Dialog role="dialog" aria-label="Zusammenführen">
        <TitleBar $size="dialog">
          <Logo />
          <TitleText as="h2">Zusammenführen - Lokales Projekt - Citavi</TitleText>
          <button type="button" aria-label="Schließen"><Close color="#3a3a3a" /></button>
        </TitleBar>
        <DialogForm>
          <Heading>Personen/Institutionen zusammenführen</Heading>
          <Field>
            <label htmlFor="person1">Person/Institution 1:</label>
            <SelectBox>
              <Select id="person1" defaultValue="Manning"><option>Manning</option></Select>
              <svg width="10" height="6" viewBox="0 0 10 6"><path d="M0 0h10L5 5.500z" fill="#000" /></svg>
            </SelectBox>
          </Field>
          <Field>
            <label htmlFor="person2">Person/Institution 2:</label>
            <SelectBox>
              <Select id="person2" defaultValue="Manning, Louise"><option>Manning, Louise</option></Select>
              <svg width="10" height="6" viewBox="0 0 10 6"><path d="M0 0h10L5 5.500z" fill="#000" /></svg>
            </SelectBox>
          </Field>
          <Choices>
            <ChoicesLabel>Zusammenführen unter:</ChoicesLabel>
            <Choice><Radio type="radio" name="target" />Manning</Choice>
            <Choice><Radio type="radio" name="target" defaultChecked />Manning, Louise</Choice>
          </Choices>
          <Buttons>
            <Highlight><PushButton type="button" $primary>OK</PushButton></Highlight>
            <PushButton type="button">Abbrechen</PushButton>
          </Buttons>
        </DialogForm>
      </Dialog>
    </Desktop>
  );
}
